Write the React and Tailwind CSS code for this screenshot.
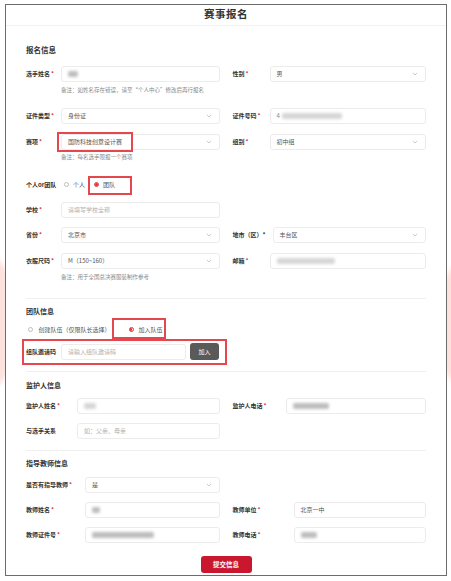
import React from "react";

const Chevron = () => (
  <svg width="6" height="4" viewBox="0 0 6 4" className="shrink-0">
    <polyline points="0.8,0.8 3,3 5.2,0.8" fill="none" stroke="#b5b5b5" strokeWidth="0.7" />
  </svg>
);

const Label = ({ w, req, children }) => (
  <div className={`shrink-0 ${w} text-[6px] font-bold text-[#333] leading-none whitespace-nowrap`}>
    {children}
    {req && <span className="text-[#e2313b] ml-[1px]">*</span>}
  </div>
);

const Box = ({ children, select, muted }) => (
  <div
    className={`flex-1 h-[16px] border border-[#ececec] rounded-[3px] flex items-center justify-between pl-[6px] pr-[7px] text-[6px] leading-none ${
      muted ? "text-[#b0b0b0]" : "text-[#555]"
    }`}
  >
    <div className="flex items-center">{children}</div>
    {select && <Chevron />}
  </div>
);

const Blur = ({ w, dark }) => (
  <span className={`inline-block h-[6px] ${w} rounded-[2px] blur-[1.5px] ${dark ? "bg-[#bdbdbd]" : "bg-[#d6d6d6]"}`} />
);

const Field = ({ label, req, w, children }) => (
  <div className="flex items-center">
    <Label w={w} req={req}>
      {label}
    </Label>
    {children}
  </div>
);

const Note = ({ children, pl }) => (
  <div className={`${pl} h-[8px] flex items-center text-[5.5px] text-[#888] leading-none`}>{children}</div>
);

const Row = ({ className, children }) => (
  <div className={`grid grid-cols-2 gap-x-[13px] h-[16px] ${className}`}>{children}</div>
);

const Radio = ({ checked }) =>
  checked ? (
    <span className="inline-flex items-center justify-center w-[5px] h-[5px] rounded-full border-[0.8px] border-[#e2313b]">
      <span className="w-[2.4px] h-[2.4px] rounded-full bg-[#e2313b]" />
    </span>
  ) : (
    <span className="inline-block w-[5px] h-[5px] rounded-full border-[0.8px] border-[#bdbdbd]" />
  );

const Heading = ({ className, children }) => (
  <div className={`h-[10px] flex items-center font-bold text-[#333] leading-none ${className}`}>{children}</div>
);

export default function App() {
  return (
    <div className="relative w-[451px] h-[581px] bg-white overflow-hidden font-['Noto_Sans_CJK_SC','Noto_Sans',sans-serif]">
      {/* background decoration */}
      <div className="absolute left-[-62px] top-[250px] w-[72px] h-[145px] rounded-full bg-[#fde1dc] blur-[2px]" />
      <div className="absolute left-[442px] top-[257px] w-[72px] h-[135px] rounded-full bg-[#fde1dc] blur-[2px]" />

      <div className="relative ml-[5px] mt-[4px] w-[442px] h-[572px] border-[1.5px] border-[#6c6c6c] bg-white flex flex-col">
        <div className="h-[21px] shrink-0 border-b border-[#f1f1f1] flex items-center justify-center pb-[2px]">
          <span className="text-[10.5px] font-bold text-[#333] leading-none tracking-[0.5px]">赛事报名</span>
        </div>

        <div className="px-[20px] flex flex-col">
          <Heading className="mt-[18.5px] text-[7.5px]">报名信息</Heading>

          <Row className="mt-[11px]">
            <Field label="选手姓名" req w="w-[35px]">
              <Box>
                <Blur w="w-[10px]" dark />
              </Box>
            </Field>
            <Field label="性别" req w="w-[37px]">
              <Box select>男</Box>
            </Field>
          </Row>
          <Note pl="pl-[35px] mt-[5px]">备注：如姓名存在错误，请至“个人中心”修改后再行报名</Note>

          <Row className="mt-[13px]">
            <Field label="证件类型" req w="w-[35px]">
              <Box select>身份证</Box>
            </Field>
            <Field label="证件号码" req w="w-[37px]">
              <Box>
                <span className="text-[#888] mr-[2px]">4</span>
                <Blur w="w-[60px]" />
              </Box>
            </Field>
          </Row>

          <Row className="mt-[10px]">
            <Field label="赛项" req w="w-[35px]">
              <Box select>国防科技创意设计赛</Box>
            </Field>
            <Field label="组别" req w="w-[37px]">
              <Box select>初中组</Box>
            </Field>
          </Row>
          <Note pl="pl-[35px] mt-[4px]">备注：每名选手限报一个赛项</Note>

          <div className="mt-[15px] h-[16px] flex items-center text-[6px] text-[#555] leading-none">
            <Label w="w-[38px]">个人or团队</Label>
            <Radio />
            <span className="ml-[4px]">个人</span>
            <span className="ml-[9px] flex items-center">
              <Radio checked />
            </span>
            <span className="ml-[4px]">团队</span>
          </div>

          <Row className="mt-[9px]">
            <Field label="学校" req w="w-[35px]">
              <Box muted>请填写学校全称</Box>
            </Field>
            <div />
          </Row>

          <Row className="mt-[9px]">
            <Field label="省份" req w="w-[35px]">
              <Box select>北京市</Box>
            </Field>
            <Field label="地市（区）*" w="w-[40px]">
              <Box select>丰台区</Box>
            </Field>
          </Row>

          <Row className="mt-[10px]">
            <Field label="衣服尺码" req w="w-[35px]">
              <Box select>M（150~160）</Box>
            </Field>
            <Field label="邮箱" req w="w-[37px]">
              <Box>
                <Blur w="w-[58px]" />
              </Box>
            </Field>
          </Row>
          <Note pl="pl-[35px] mt-[5px]">备注：用于全国总决赛服装制作参考</Note>

          <div className="mt-[16px] h-px bg-[#efefef]" />

          <Heading className="mt-[8px] text-[7px]">团队信息</Heading>

          <div className="mt-[5px] h-[16px] flex items-center text-[6px] text-[#555] leading-none pl-[1.5px]">
            <Radio />
            <span className="ml-[6px]">创建队伍（仅限队长选择）</span>
            <span className="ml-[18px] flex items-center">
              <Radio checked />
            </span>
            <span className="ml-[5px]">加入队伍</span>
          </div>

          <div className="mt-[6px] h-[16px] flex items-center w-[193px]">
            <Label w="w-[35px]">组队邀请码</Label>
            <Box muted>请输入组队邀请码</Box>
            <div className="ml-[4px] w-[29px] h-[17px] rounded-[3px] bg-[#5a5a5a] text-white text-[6px] flex items-center justify-center leading-none">
              加入
            </div>
          </div>

          <div className="mt-[11px] h-px bg-[#efefef]" />

          <Heading className="mt-[9px] text-[7px]">监护人信息</Heading>

          <Row className="mt-[7px]">
            <Field label="监护人姓名" req w="w-[51px]">
              <Box>
                <Blur w="w-[12px]" />
              </Box>
            </Field>
            <Field label="监护人电话" req w="w-[53px]">
              <Box>
                <Blur w="w-[36px]" dark />
              </Box>
            </Field>
          </Row>

          <Row className="mt-[9px]">
            <Field label="与选手关系" w="w-[51px]">
              <Box muted>如：父亲、母亲</Box>
            </Field>
            <div />
          </Row>

          <div className="mt-[11px] h-px bg-[#efefef]" />

          <Heading className="mt-[8px] text-[7px]">指导教师信息</Heading>

          <Row className="mt-[8px]">
            <Field label="是否有指导教师" req w="w-[59px]">
              <Box select>是</Box>
            </Field>
            <div />
          </Row>

          <Row className="mt-[9px]">
            <Field label="教师姓名" req w="w-[59px]">
              <Box>
                <Blur w="w-[8px]" dark />
              </Box>
            </Field>
            <Field label="教师单位" req w="w-[61px]">
              <Box>北京一中</Box>
            </Field>
          </Row>

          <Row className="mt-[9px]">
            <Field label="教师证件号" req w="w-[59px]">
              <Box>
                <Blur w="w-[62px]" dark />
              </Box>
            </Field>
            <Field label="教师电话" req w="w-[61px]">
              <Box>
                <Blur w="w-[16px]" dark />
              </Box>
            </Field>
          </Row>

          <div className="mt-[13px] flex justify-center">
            <div className="w-[51px] h-[17px] rounded-[3px] bg-[#c8172f] text-white text-[6.5px] font-bold flex items-center justify-center leading-none">
              提交信息
            </div>
          </div>
        </div>
      </div>

      {/* annotation boxes */}
      <div className="absolute left-[57px] top-[132px] w-[76px] h-[20px] border-2 border-[#e5474e]" />
      <div className="absolute left-[88px] top-[176px] w-[44px] h-[19px] border-2 border-[#e5474e]" />
      <div className="absolute left-[112px] top-[318px] w-[54px] h-[21px] border-2 border-[#e5474e]" />
      <div className="absolute left-[22px] top-[339px] w-[205px] h-[26px] border-2 border-[#e5474e]" />
    </div>
  );
}
